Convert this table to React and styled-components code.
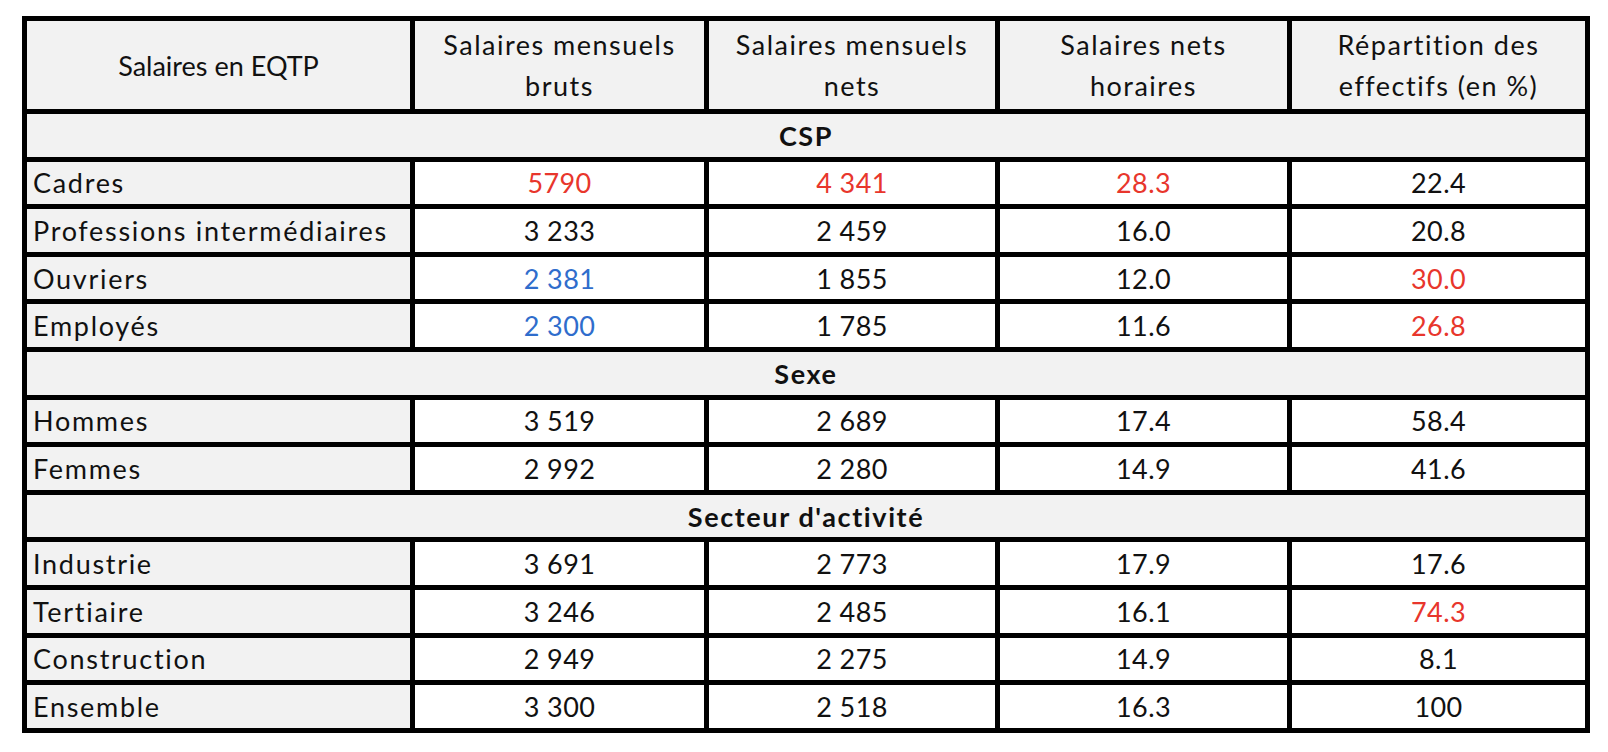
import React from 'react';
import styled, { createGlobalStyle } from 'styled-components';

const GlobalStyle = createGlobalStyle`
  html, body {
    margin: 0;
    padding: 0;
    background: #ffffff;
  }
`;

const Page = styled.div`
  width: 1608px;
  height: 752px;
  padding: 16px 0 0 22px;
  box-sizing: border-box;
  font-family: Lato, "Open Sans", sans-serif;
  color: #111;
`;

const Table = styled.table`
  border-collapse: collapse;
  table-layout: fixed;
  width: 1563px;
  border: 5px solid #000;
`;

const HeadCell = styled.th`
  height: 88px;
  padding: 0 6px;
  border: 5px solid #000;
  background: #f2f2f2;
  font-weight: 400;
  font-size: 27px;
  line-height: 41px;
  letter-spacing: ${(p) => (p.$tight ? '0' : '1.5px')};
  text-align: center;
  vertical-align: middle;
`;

const SectionCell = styled.td`
  height: 42.6px;
  padding: 0;
  border: 5px solid #000;
  background: #f2f2f2;
  font-weight: 700;
  font-size: 27px;
  letter-spacing: 1.6px;
  text-align: center;
`;

const Label = styled.td`
  height: 42.6px;
  padding: 0 6px;
  border: 5px solid #000;
  background: #f2f2f2;
  font-size: 27px;
  white-space: nowrap;
  letter-spacing: 1.7px;
`;

const Value = styled.td`
  height: 42.6px;
  padding: 0;
  border: 5px solid #000;
  background: #fff;
  font-size: 27px;
  letter-spacing: 0.4px;
  text-align: center;
  color: ${(p) => (p.$tone === 'red' ? '#e8362c' : p.$tone === 'blue' ? '#2f6dcc' : '#111')};
`;

const cols = [388, 294, 291, 292, 298];

const headers = [
  ['Salaires en EQTP'],
  ['Salaires mensuels', 'bruts'],
  ['Salaires mensuels', 'nets'],
  ['Salaires nets', 'horaires'],
  ['Répartition des', 'effectifs (en %)'],
];

const sections = [
  {
    title: 'CSP',
    rows: [
      ['Cadres', ['5790', 'red'], ['4 341', 'red'], ['28.3', 'red'], '22.4'],
      ['Professions intermédiaires', '3 233', '2 459', '16.0', '20.8'],
      ['Ouvriers', ['2 381', 'blue'], '1 855', '12.0', ['30.0', 'red']],
      ['Employés', ['2 300', 'blue'], '1 785', '11.6', ['26.8', 'red']],
    ],
  },
  {
    title: 'Sexe',
    rows: [
      ['Hommes', '3 519', '2 689', '17.4', '58.4'],
      ['Femmes', '2 992', '2 280', '14.9', '41.6'],
    ],
  },
  {
    title: "Secteur d'activité",
    rows: [
      ['Industrie', '3 691', '2 773', '17.9', '17.6'],
      ['Tertiaire', '3 246', '2 485', '16.1', ['74.3', 'red']],
      ['Construction', '2 949', '2 275', '14.9', '8.1'],
      ['Ensemble', '3 300', '2 518', '16.3', '100'],
    ],
  },
];

export default function App() {
  return (
    <>
      <GlobalStyle />
      <Page>
        <Table>
          <colgroup>
            {cols.map((w, i) => (
              <col key={i} style={{ width: w }} />
            ))}
          </colgroup>
          <thead>
            <tr>
              {headers.map((lines, i) => (
                <HeadCell key={i} $tight={i === 0}>
                  {lines.map((l, j) => (
                    <div key={j}>{l}</div>
                  ))}
                </HeadCell>
              ))}
            </tr>
          </thead>
          <tbody>
            {sections.map((s) => (
              <React.Fragment key={s.title}>
                <tr>
                  <SectionCell colSpan={5}>{s.title}</SectionCell>
                </tr>
                {s.rows.map(([label, ...vals]) => (
                  <tr key={label}>
                    <Label>{label}</Label>
                    {vals.map((v, i) =>
                      Array.isArray(v) ? (
                        <Value key={i} $tone={v[1]}>{v[0]}</Value>
                      ) : (
                        <Value key={i}>{v}</Value>
                      )
                    )}
                  </tr>
                ))}
              </React.Fragment>
            ))}
          </tbody>
        </Table>
      </Page>
    </>
  );
}
